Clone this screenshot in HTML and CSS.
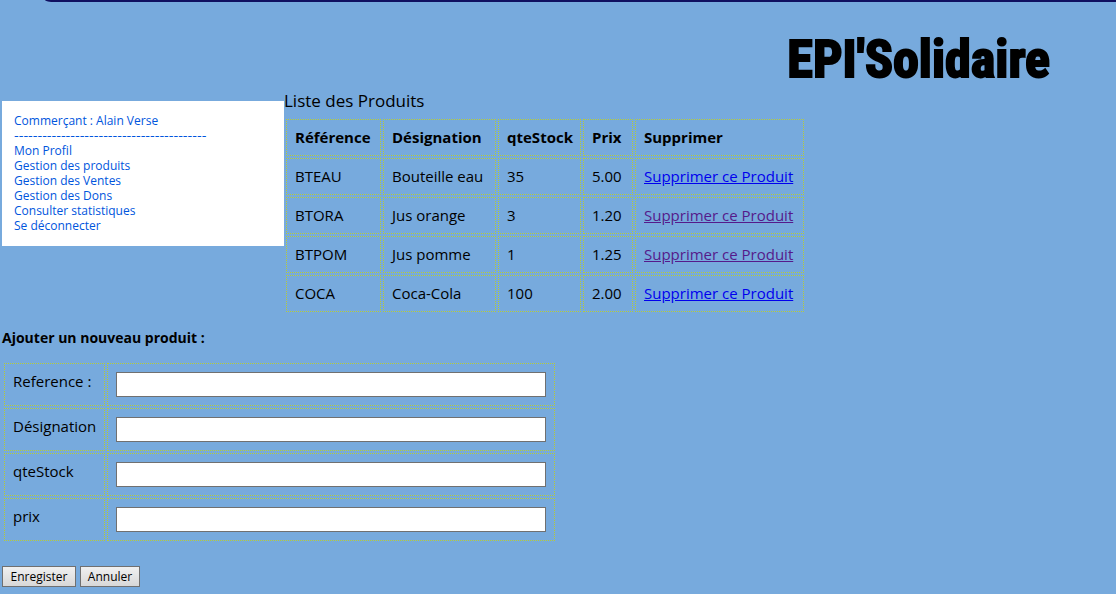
FILE: index.html
```html
<!DOCTYPE html>
<html lang="fr">
<head>
<meta charset="utf-8">
<title>EPI'Solidaire</title>
<link rel="stylesheet" href="styles.css">
</head>
<body>
<div class="banner"></div>
<header class="site-header"><h1 class="site-title">EPI'Solidaire</h1></header>
<div class="content">
  <nav class="menu">
    <p class="menu-line">Commerçant : Alain Verse</p>
    <p class="menu-line menu-rule">-----------------------------------------</p>
    <a class="menu-line" href="#">Mon Profil</a>
    <a class="menu-line" href="#">Gestion des produits</a>
    <a class="menu-line" href="#">Gestion des Ventes</a>
    <a class="menu-line" href="#">Gestion des Dons</a>
    <a class="menu-line" href="#">Consulter statistiques</a>
    <a class="menu-line" href="#">Se déconnecter</a>
  </nav>
  <main class="products">
    <h2 class="list-title">Liste des Produits</h2>
    <table class="grid">
      <thead>
        <tr><th class="col-ref">Référence</th><th class="col-name">Désignation</th><th class="col-qty">qteStock</th><th class="col-price">Prix</th><th class="col-action">Supprimer</th></tr>
      </thead>
      <tbody>
        <tr><td>BTEAU</td><td>Bouteille eau</td><td>35</td><td>5.00</td><td><a class="link" href="#">Supprimer ce Produit</a></td></tr>
        <tr><td>BTORA</td><td>Jus orange</td><td>3</td><td>1.20</td><td><a class="link seen" href="#">Supprimer ce Produit</a></td></tr>
        <tr><td>BTPOM</td><td>Jus pomme</td><td>1</td><td>1.25</td><td><a class="link seen" href="#">Supprimer ce Produit</a></td></tr>
        <tr><td>COCA</td><td>Coca-Cola</td><td>100</td><td>2.00</td><td><a class="link" href="#">Supprimer ce Produit</a></td></tr>
      </tbody>
    </table>
  </main>
</div>
<form class="add-form">
  <h3 class="form-title">Ajouter un nouveau produit :</h3>
  <table class="grid">
    <tbody>
      <tr><td class="col-label"><label for="ref">Reference :</label></td><td><input class="field" id="ref" type="text"></td></tr>
      <tr><td><label for="name">Désignation</label></td><td><input class="field" id="name" type="text"></td></tr>
      <tr><td><label for="qty">qteStock</label></td><td><input class="field" id="qty" type="text"></td></tr>
      <tr><td><label for="price">prix</label></td><td><input class="field" id="price" type="text"></td></tr>
    </tbody>
  </table>
  <div class="actions"><button class="button save" type="submit">Enregister</button><button class="button cancel" type="reset">Annuler</button></div>
</form>
</body>
</html>
```
FILE: styles.css
```css
body {
  margin: 0;
  background: #77aadd;
  color: #000;
  font-family: "Trebuchet MS", "Open Sans", "Noto Sans", sans-serif;
  font-size: 15px;
  line-height: 19px;
}
.banner {
  height: 2px;
  margin-left: 45px;
  background: #101060;
  border-bottom-left-radius: 10px 2px;
}
.site-header {
  display: flex;
  justify-content: flex-end;
  padding: 26px 66px 9px 0;
}
.site-title {
  margin: 0;
  font-family: Impact, "Roboto Condensed", "Liberation Sans Narrow", "Liberation Sans", sans-serif;
  font-size: 52px;
  line-height: 64px;
  font-weight: 700;
  -webkit-text-stroke: 2px #000;
}
.content {
  display: flex;
  align-items: flex-start;
  padding-left: 2px;
}
.menu {
  box-sizing: border-box;
  width: 282px;
  padding: 12px 12px 13px;
  background: #fff;
  font-size: 12px;
  line-height: 15px;
  color: #0055dd;
}
.menu-line {
  display: block;
  margin: 0;
  color: inherit;
  text-decoration: none;
}
.menu-rule {
  font-family: "DejaVu Sans", sans-serif;
  font-size: 13px;
}
.products {
  margin-top: -10px;
}
.list-title {
  margin: 0 0 6px;
  font-size: 17px;
  line-height: 20px;
  font-weight: 400;
}
.grid {
  border-spacing: 2px;
}
.grid th,
.grid td {
  box-sizing: border-box;
  padding: 8px;
  border: 1px dotted #b8cc33;
  text-align: left;
  vertical-align: top;
}
.grid th {
  padding-right: 6px;
}
.col-ref { width: 95px; }
.col-name { width: 113px; }
.col-qty { width: 83px; }
.col-price { width: 50px; }
.col-action { width: 169px; }
.col-label { width: 101px; }
.link {
  color: #0000ee;
}
.seen {
  color: #551a8b;
}
.add-form {
  padding: 14px 2px 6px;
}
.form-title {
  margin: 0 0 14px;
  font-size: 14px;
  line-height: 19px;
}
.field {
  display: block;
  box-sizing: border-box;
  width: 430px;
  height: 25px;
  padding: 2px 4px;
  border: 1px solid #707070;
  background: #fff;
  font: inherit;
}
.actions {
  display: flex;
  gap: 4px;
  margin-top: 23px;
}
.button {
  box-sizing: border-box;
  height: 21px;
  padding: 0;
  border: 1px solid #707070;
  background: linear-gradient(#f0f0f0, #d8d8d8);
  color: #000;
  font-family: inherit;
  font-size: 12px;
  line-height: 17px;
}
.save { width: 74px; }
.cancel { width: 60px; }
```
